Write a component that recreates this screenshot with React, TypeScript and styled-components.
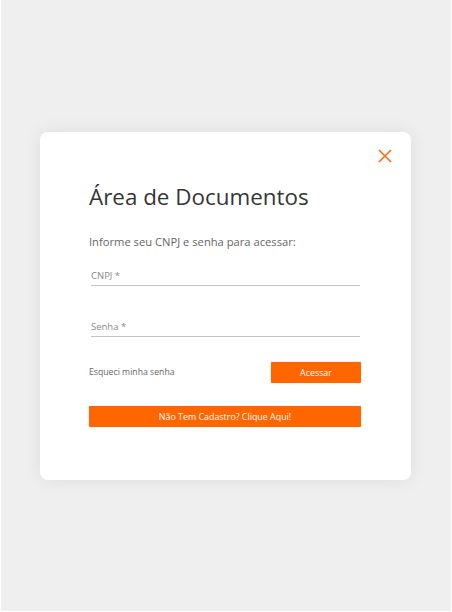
import React from "react";
import styled, { createGlobalStyle } from "styled-components";

const Global = createGlobalStyle`
  html, body { margin: 0; padding: 0; background: #ffffff; }
  body { font-family: "Open Sans", "Noto Sans", sans-serif; }
  * { box-sizing: border-box; }
`;

const Page = styled.div`
  width: 452px;
  height: 612px;
  padding: 0 1px 1px 1px;
  background: #ffffff;
`;

const Backdrop = styled.div`
  width: 100%;
  height: 100%;
  background: #efefef;
  display: flex;
  align-items: center;
  justify-content: center;
`;

const Card = styled.div`
  width: 371px;
  height: 348px;
  margin-left: -1px;
  background: #ffffff;
  border-radius: 8px;
  box-shadow: 0 0 18px rgba(0, 0, 0, 0.08);
  padding: 17px 50px 0 49px;
  display: flex;
  flex-direction: column;
`;

const CloseRow = styled.div`
  display: flex;
  justify-content: flex-end;
  margin-right: -31px;
  height: 14px;
`;

const CloseButton = styled.button`
  width: 14px;
  height: 14px;
  padding: 0;
  border: 0;
  background: transparent;
  cursor: pointer;
  display: flex;
`;

const Title = styled.h1`
  margin: 19px 0 0 0;
  font-size: 22.4px;
  font-weight: 400;
  line-height: 30px;
  color: #363636;
`;

const Subtitle = styled.p`
  margin: 22px 0 0 0;
  font-size: 11.2px;
  line-height: 15px;
  color: #666666;
`;

const Field = styled.div<{ $gap: number }>`
  margin: ${(p) => p.$gap}px 1px 0 2px;
  border-bottom: 1px solid #c4c4c4;
  padding: 0 0 3px 0;
`;

const Label = styled.label`
  display: block;
  font-size: 9.5px;
  line-height: 12px;
  color: #8a8a8a;
`;

const ActionRow = styled.div`
  margin-top: 25px;
  display: flex;
  align-items: center;
  justify-content: space-between;
`;

const Forgot = styled.a`
  font-size: 8.7px;
  color: #666666;
  text-decoration: none;
  cursor: pointer;
`;

const OrangeButton = styled.button<{ $full?: boolean }>`
  width: ${(p) => (p.$full ? "272px" : "90px")};
  height: 21px;
  border: 0;
  border-radius: 1px;
  background: #ff6600;
  color: #ffffff;
  font-family: "Open Sans", "Noto Sans", sans-serif;
  font-size: 8.9px;
  padding: 0;
  cursor: pointer;
  box-shadow: 0 0 1px rgba(255, 102, 0, 0.6);
`;

const FullRow = styled.div`
  margin-top: 23px;
  display: flex;
`;

export default function App() {
  return (
    <>
      <Global />
      <Page>
        <Backdrop>
          <Card>
            <CloseRow>
              <CloseButton aria-label="Fechar">
                <svg width="14" height="14" viewBox="0 0 14 14">
                  <path d="M1 1 L13 13 M13 1 L1 13" stroke="#ff6a13" strokeWidth="1.6" fill="none" />
                </svg>
              </CloseButton>
            </CloseRow>
            <Title>Área de Documentos</Title>
            <Subtitle>Informe seu CNPJ e senha para acessar:</Subtitle>
            <Field $gap={21}>
              <Label>CNPJ *</Label>
            </Field>
            <Field $gap={35}>
              <Label>Senha *</Label>
            </Field>
            <ActionRow>
              <Forgot>Esqueci minha senha</Forgot>
              <OrangeButton>Acessar</OrangeButton>
            </ActionRow>
            <FullRow>
              <OrangeButton $full>Não Tem Cadastro? Clique Aqui!</OrangeButton>
            </FullRow>
          </Card>
        </Backdrop>
      </Page>
    </>
  );
}
